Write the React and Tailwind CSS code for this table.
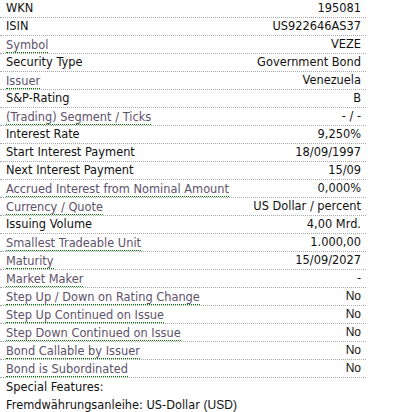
import React from 'react';

const rows = [
  { label: 'WKN', value: '195081' },
  { label: 'ISIN', value: 'US922646AS37' },
  { label: 'Symbol', value: 'VEZE', tip: true },
  { label: 'Security Type', value: 'Government Bond' },
  { label: 'Issuer', value: 'Venezuela', tip: true },
  { label: 'S&P-Rating', value: 'B' },
  { label: '(Trading) Segment / Ticks', value: '- / -', tip: true },
  { label: 'Interest Rate', value: '9,250%' },
  { label: 'Start Interest Payment', value: '18/09/1997' },
  { label: 'Next Interest Payment', value: '15/09' },
  { label: 'Accrued Interest from Nominal Amount', value: '0,000%', tip: true },
  { label: 'Currency / Quote', value: 'US Dollar / percent', tip: true },
  { label: 'Issuing Volume', value: '4,00 Mrd.' },
  { label: 'Smallest Tradeable Unit', value: '1.000,00', tip: true },
  { label: 'Maturity', value: '15/09/2027', tip: true },
  { label: 'Market Maker', value: '-', tip: true },
  { label: 'Step Up / Down on Rating Change', value: 'No', tip: true, arial: true },
  { label: 'Step Up Continued on Issue', value: 'No', tip: true, arial: true },
  { label: 'Step Down Continued on Issue', value: 'No', tip: true, arial: true },
  { label: 'Bond Callable by Issuer', value: 'No', tip: true, arial: true },
  { label: 'Bond is Subordinated', value: 'No', tip: true, arial: true },
];

export default function App() {
  return (
    <div className="w-[404px] h-[412px] bg-white overflow-hidden font-['DejaVu_Sans',Verdana,sans-serif] text-[11.4px] text-[#111]">
      <div className="w-[366px]">
        {rows.map((r) => (
          <div
            key={r.label}
            className="flex items-center justify-between h-[18px] border-b border-dotted border-[#a8a8a8] pl-[6px] pr-[5px] leading-[17px]"
          >
            <span
              className={
                r.tip
                  ? 'text-[#5e526b] border-b border-dotted border-[#008000] leading-[14px] mt-[2px]'
                  : ''
              }
            >
              {r.label}
            </span>
            <span className={r.arial ? "font-['Liberation_Sans',Arial,sans-serif] text-[12px]" : ''}>
              {r.value}
            </span>
          </div>
        ))}
        <div className="pl-[6px] leading-[18px]">
          <div>Special Features:</div>
          <div>
            Fremdwährungsanleihe: US-Dollar{' '}
            <span className="font-['Liberation_Sans',Arial,sans-serif] text-[12px]">(USD)</span>
          </div>
        </div>
      </div>
    </div>
  );
}
